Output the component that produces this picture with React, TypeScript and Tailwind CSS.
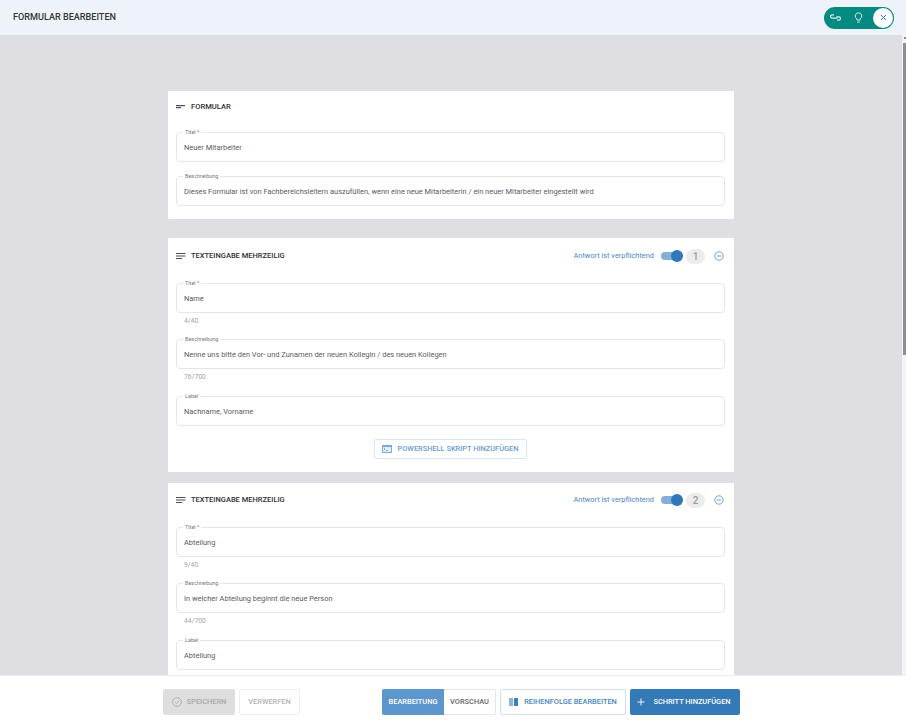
import React from 'react';

const font = { fontFamily: 'Roboto, sans-serif' };

function Field({ label, value, counter }: { label: string; value: string; counter?: string }) {
  return (
    <div>
      <div className="relative flex h-[30px] items-center rounded-[4px] border border-[#e4e6ea] px-[7px] pt-[1px] text-[7.45px] text-[#5b5b5f]">
        <span className="absolute left-[6px] top-[-4px] bg-white px-[2px] text-[5.5px] leading-[7px] text-[#77777c]">{label}</span>
        {value}
      </div>
      {counter && <div className="h-[26px] pl-2 pt-[3px] text-[6.8px] leading-[10px] text-[#a5a5aa]">{counter}</div>}
    </div>
  );
}

function LinesIcon({ short }: { short?: boolean }) {
  return (
    <svg width="10" height="8" viewBox="0 0 10 8" className="shrink-0 text-[#4a4a4f]" fill="currentColor">
      {short ? (
        <>
          <rect x="0" y="2" width="9" height="1.2" />
          <rect x="0" y="4" width="5" height="1.2" />
        </>
      ) : (
        <>
          <rect x="0" y="1" width="9.5" height="1" />
          <rect x="0" y="3.5" width="9.5" height="1" />
          <rect x="0" y="6" width="6" height="1" />
        </>
      )}
    </svg>
  );
}

function StepHeader({ n }: { n: number }) {
  return (
    <div className="mb-[19px] flex h-[16px] items-center justify-between">
      <div className="flex items-center gap-[5px] text-[7.5px] font-medium text-[#2f2f33]">
        <LinesIcon />
        TEXTEINGABE MEHRZEILIG
      </div>
      <div className="flex items-center">
        <span className="text-[7.4px] text-[#4a88c4]">Antwort ist verpflichtend</span>
        <div className="relative ml-[7px] h-[8px] w-[21px] rounded-full bg-[#85afd8]">
          <span className="absolute right-[-1px] top-[-2px] h-[12px] w-[12px] rounded-full bg-[#2f78ba]"></span>
        </div>
        <div className="ml-[4px] flex h-[15px] w-[19px] items-center justify-center rounded-full bg-[#ececec] text-[10px] font-medium text-[#9a9a9a]">{n}</div>
        <svg width="10" height="10" viewBox="0 0 10 10" className="ml-[9px] mr-[1px]" fill="none" stroke="#5f97cd" strokeWidth="0.9">
          <circle cx="5" cy="5" r="4.2" />
          <path d="M2.8 5h4.4" />
        </svg>
      </div>
    </div>
  );
}

export default function App() {
  return (
    <div className="flex h-[723px] w-[906px] flex-col overflow-hidden bg-white" style={font}>
      {/* Top bar */}
      <header className="flex h-[35px] shrink-0 items-center justify-between bg-[#edf3f8] pl-[13px] pr-[12px]">
        <h1 className="text-[9.1px] font-medium text-[#333337]">FORMULAR BEARBEITEN</h1>
        <div className="flex h-[22px] w-[70px] items-center justify-between rounded-full bg-[#048a80] pl-[6px] pr-[1px]">
          <svg width="11" height="7" viewBox="0 0 11 7" fill="none" stroke="#d8f0ee" strokeWidth="1.2">
            <path d="M4 0.8H2.2a1.7 1.7 0 0 0 0 3.4H7.5M6.5 2.8h2.3a1.7 1.7 0 0 1 0 3.4H7" />
          </svg>
          <svg width="9" height="11" viewBox="0 0 9 11" fill="none" stroke="#e4f5f3" strokeWidth="0.9" className="ml-[8px]">
            <path d="M4.5 0.8a3.2 3.2 0 0 0-1.6 6v1.2h3.2V6.8a3.2 3.2 0 0 0-1.6-6zM3.2 10h2.6" />
          </svg>
          <div className="ml-[6px] flex h-[20px] w-[20px] items-center justify-center rounded-full bg-white">
            <svg width="7" height="7" viewBox="0 0 7 7" stroke="#3b7dbd" strokeWidth="1">
              <path d="M1 1l5 5M6 1L1 6" />
            </svg>
          </div>
        </div>
      </header>

      <div className="flex min-h-0 flex-1">
        <main className="flex-1 overflow-hidden bg-[#dfdfe3] pl-[168px] pr-[168px] pt-[56px]">
          {/* Form meta */}
          <section className="mb-[19px] h-[128px] rounded-[1px] bg-white pl-[8px] pr-[9px] pt-[8px]">
            <div className="mb-[17px] flex h-[16px] items-center gap-[5px] text-[7.6px] font-medium text-[#2f2f33]">
              <LinesIcon short />
              FORMULAR
            </div>
            <div className="flex flex-col gap-[14px]">
              <Field label="Titel *" value="Neuer Mitarbeiter" />
              <Field label="Beschreibung" value="Dieses Formular ist von Fachbereichsleitern auszufüllen, wenn eine neue Mitarbeiterin / ein neuer Mitarbeiter eingestellt wird" />
            </div>
          </section>

          {/* Step 1 */}
          <section className="mb-[11px] h-[234px] rounded-[1px] bg-white pl-[8px] pr-[9px] pt-[10px]">
            <StepHeader n={1} />
            <Field label="Titel *" value="Name" counter="4/40" />
            <Field label="Beschreibung" value="Nenne uns bitte den Vor- und Zunamen der neuen Kollegin / des neuen Kollegen" counter="76/700" />
            <div className="mt-[1px]">
              <Field label="Label" value="Nachname, Vorname" />
            </div>
            <div className="mt-[13px] flex justify-center">
              <button className="flex h-[20px] w-[153px] items-center justify-center gap-[6px] rounded-[2px] border border-[#d8e6f3] pr-[1px] text-[7.4px] font-medium text-[#6a9dcf]">
                <svg width="10" height="8" viewBox="0 0 10 8">
                  <rect x="0" y="0" width="10" height="8" rx="0.8" fill="#7aa8d6" />
                  <rect x="1" y="2" width="8" height="5" fill="#e3eef8" />
                  <path d="M2 3l1.2 1L2 5M4 5.5h2" stroke="#4a85bf" strokeWidth="0.6" fill="none" />
                </svg>
                POWERSHELL SKRIPT HINZUFÜGEN
              </button>
            </div>
          </section>

          {/* Step 2 */}
          <section className="rounded-[1px] bg-white pb-[20px] pl-[8px] pr-[9px] pt-[9px]">
            <StepHeader n={2} />
            <Field label="Titel *" value="Abteilung" counter="9/40" />
            <Field label="Beschreibung" value="In welcher Abteilung beginnt die neue Person" counter="44/700" />
            <div className="mt-[1px]">
              <Field label="Label" value="Abteilung" />
            </div>
          </section>
        </main>

        {/* Scrollbar */}
        <div className="flex w-[4px] shrink-0 flex-col bg-[#f4f4f4]">
          <div className="ml-[2px] mt-[2px] h-[2px] w-[2px] bg-[#8f8f8f]"></div>
          <div className="h-[4px]"></div>
          <div className="ml-[1px] h-[312px] bg-[#8f8f8f]"></div>
        </div>
      </div>

      {/* Bottom bar */}
      <footer className="flex h-[48px] shrink-0 items-center border-t border-[#eeeeee] bg-white pl-[163px] pt-[5px] text-[7.4px] font-medium">
        <button className="flex h-[26px] w-[72px] items-center justify-center gap-[5px] rounded-[2px] bg-[#dedede] text-[#a9a9a9]">
          <svg width="10" height="10" viewBox="0 0 10 10" fill="none" stroke="#a9a9a9" strokeWidth="0.8">
            <circle cx="5" cy="5" r="4.4" />
            <path d="M3 5.1l1.5 1.5L7.2 3.7" />
          </svg>
          SPEICHERN
        </button>
        <button className="ml-[4px] h-[26px] w-[61px] rounded-[2px] border border-[#eeeeee] text-[#b3b3b3]">VERWERFEN</button>
        <div className="ml-[82px] flex h-[26px] items-stretch">
          <button className="w-[62px] rounded-l-[2px] bg-[#5c96cc] text-white">BEARBEITUNG</button>
          <button className="w-[52px] rounded-r-[2px] border border-l-0 border-[#e6e6e6] text-[#66666a]">VORSCHAU</button>
        </div>
        <button className="ml-[4px] flex h-[26px] w-[126px] items-center justify-center gap-[6px] rounded-[2px] border border-[#cfe0f0] text-[#4b86c0]">
          <svg width="9" height="8" viewBox="0 0 9 8">
            <rect x="0" y="0" width="4" height="8" fill="#8db4da" />
            <rect x="5" y="0" width="4" height="8" fill="#3f7fbc" />
          </svg>
          REIHENFOLGE BEARBEITEN
        </button>
        <button className="ml-[4px] flex h-[26px] w-[110px] items-center justify-center gap-[8px] rounded-[2px] bg-[#337ab7] pr-[2px] text-white">
          <svg width="8" height="8" viewBox="0 0 8 8" stroke="white" strokeWidth="0.9">
            <path d="M4 0.5v7M0.5 4h7" />
          </svg>
          SCHRITT HINZUFÜGEN
        </button>
      </footer>
    </div>
  );
}
